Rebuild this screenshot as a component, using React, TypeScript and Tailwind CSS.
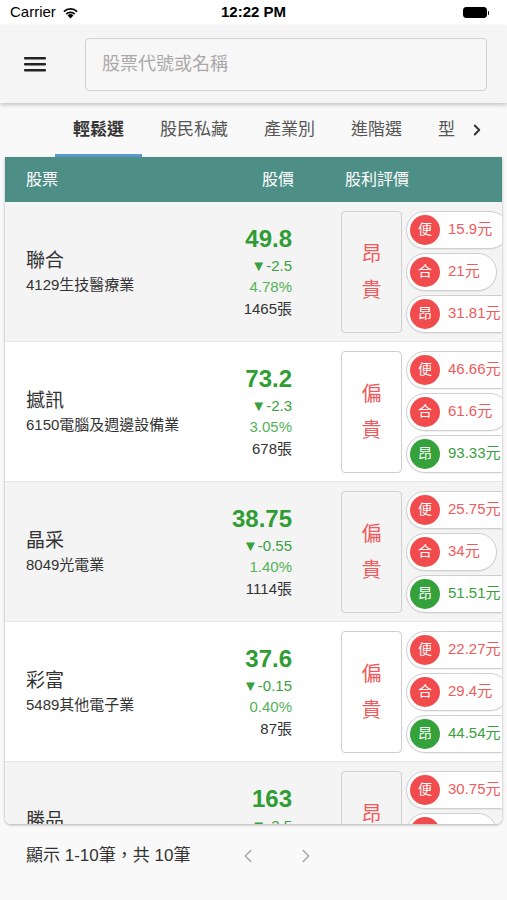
import { ChevronLeft, ChevronRight } from "lucide-react";

type Pill = { label: string; value: string; green?: boolean };
type Stock = {
  name: string;
  sub: string;
  price: string;
  change: string;
  pct: string;
  vol: string;
  rating: string;
  pills: Pill[];
};

const stocks: Stock[] = [
  {
    name: "聯合",
    sub: "4129生技醫療業",
    price: "49.8",
    change: "▼-2.5",
    pct: "4.78%",
    vol: "1465張",
    rating: "昂貴",
    pills: [
      { label: "便", value: "15.9元" },
      { label: "合", value: "21元" },
      { label: "昂", value: "31.81元" },
    ],
  },
  {
    name: "撼訊",
    sub: "6150電腦及週邊設備業",
    price: "73.2",
    change: "▼-2.3",
    pct: "3.05%",
    vol: "678張",
    rating: "偏貴",
    pills: [
      { label: "便", value: "46.66元" },
      { label: "合", value: "61.6元" },
      { label: "昂", value: "93.33元", green: true },
    ],
  },
  {
    name: "晶采",
    sub: "8049光電業",
    price: "38.75",
    change: "▼-0.55",
    pct: "1.40%",
    vol: "1114張",
    rating: "偏貴",
    pills: [
      { label: "便", value: "25.75元" },
      { label: "合", value: "34元" },
      { label: "昂", value: "51.51元", green: true },
    ],
  },
  {
    name: "彩富",
    sub: "5489其他電子業",
    price: "37.6",
    change: "▼-0.15",
    pct: "0.40%",
    vol: "87張",
    rating: "偏貴",
    pills: [
      { label: "便", value: "22.27元" },
      { label: "合", value: "29.4元" },
      { label: "昂", value: "44.54元", green: true },
    ],
  },
  {
    name: "勝品",
    sub: "3229電子零組件業",
    price: "163",
    change: "▼-3.5",
    pct: "2.10%",
    vol: "512張",
    rating: "昂貴",
    pills: [
      { label: "便", value: "30.75元" },
      { label: "合", value: "41元" },
      { label: "昂", value: "61.5元" },
    ],
  },
];

const tabs = ["輕鬆選", "股民私藏", "產業別", "進階選", "型態選"];

function StatusBar() {
  return (
    <div className="relative flex h-[25px] shrink-0 items-center bg-white px-[10px] text-[15px] text-black">
      <span>Carrier</span>
      <svg className="ml-[6px]" width="17" height="13" viewBox="0 0 17 13">
        <path d="M8.5 12.5 L5.6 9.4 A4.2 4.2 0 0 1 11.4 9.4 Z" fill="#000" />
        <path d="M3.7 7.4 A6.9 6.9 0 0 1 13.3 7.4 L12.1 8.7 A5.2 5.2 0 0 0 4.9 8.7 Z" fill="#000" />
        <path d="M1.3 4.9 A10.3 10.3 0 0 1 15.7 4.9 L14.5 6.2 A8.6 8.6 0 0 0 2.5 6.2 Z" fill="#000" />
      </svg>
      <span className="absolute left-1/2 -translate-x-1/2 font-semibold">12:22 PM</span>
      <div className="ml-auto mr-[8px] flex items-center">
        <div className="h-[11px] w-[24px] rounded-[3px] border border-black bg-black" />
        <div className="ml-[1px] h-[4px] w-[1.5px] rounded-r-sm bg-black" />
      </div>
    </div>
  );
}

function Header() {
  return (
    <div className="relative z-10 flex h-[78px] shrink-0 items-center bg-[#f5f5f5] shadow-[0_2px_4px_rgba(0,0,0,0.22)]">
      <svg className="ml-[24px]" width="22" height="16" viewBox="0 0 22 16">
        <rect x="0" y="1" width="22" height="2.4" rx="1" fill="#222" />
        <rect x="0" y="7" width="22" height="2.4" rx="1" fill="#222" />
        <rect x="0" y="13" width="22" height="2.4" rx="1" fill="#222" />
      </svg>
      <div className="ml-[39px] flex h-[53px] w-[402px] items-center rounded-[4px] border border-[#d2d2d2] bg-[#f7f7f7] pl-[16px] text-[18px] text-[#a9a9a9]">
        股票代號或名稱
      </div>
    </div>
  );
}

function Tabs() {
  return (
    <div className="flex h-[54px] shrink-0 items-stretch bg-[#f9f9f9]">
      <div className="ml-[55px] flex w-[400px] overflow-hidden">
        {tabs.map((t, i) => (
          <div
            key={t}
            className={
              i === 0
                ? "flex shrink-0 items-center border-b-[3px] border-[#5b9bd1] px-[18px] pt-[3px] text-[17px] font-bold text-[#333]"
                : "flex shrink-0 items-center border-b-[3px] border-transparent px-[18px] pt-[3px] text-[17px] text-[#555]"
            }
          >
            {t}
          </div>
        ))}
      </div>
      <div className="flex w-[44px] items-center justify-center pb-[1px]">
        <ChevronRight size={18} strokeWidth={2.6} color="#333" />
      </div>
    </div>
  );
}

function PillItem({ p }: { p: Pill }) {
  return (
    <div className="flex h-[38px] w-max items-center gap-[8px] whitespace-nowrap rounded-full border border-[#cfcfcf] bg-white pl-[3px] pr-[16px] shadow-[0_1px_1px_rgba(0,0,0,0.06)]">
      <div
        className={
          p.green
            ? "flex h-[30px] w-[30px] items-center justify-center rounded-full bg-[#35a13a] text-[14px] text-white"
            : "flex h-[30px] w-[30px] items-center justify-center rounded-full bg-[#f24b4d] text-[14px] text-white"
        }
      >
        {p.label}
      </div>
      <span className={p.green ? "text-[15px] text-[#3a9f3e]" : "text-[15px] text-[#ef5a5c]"}>{p.value}</span>
    </div>
  );
}

function Row({ s, odd }: { s: Stock; odd: boolean }) {
  return (
    <div
      className={
        odd
          ? "flex h-[140px] shrink-0 items-center border-b border-[#e6e6e6] bg-[#f4f4f4]"
          : "flex h-[140px] shrink-0 items-center border-b border-[#e6e6e6] bg-white"
      }
    >
      <div className="flex flex-1 flex-col pl-[21px]">
        <span className="text-[19px] leading-[26px] text-[#333]">{s.name}</span>
        <span className="text-[15px] leading-[22px] text-[#333]">{s.sub}</span>
      </div>
      <div className="mt-[3px] flex w-[100px] flex-col items-end">
        <span className="text-[24px] font-bold leading-[26px] text-[#2f9d34]">{s.price}</span>
        <span className="mt-[4px] text-[15px] leading-[20px] text-[#3a9f3e]">{s.change}</span>
        <span className="text-[15px] leading-[22px] text-[#55b258]">{s.pct}</span>
        <span className="text-[15px] leading-[22px] text-[#333]">{s.vol}</span>
      </div>
      <div className="ml-[49px] flex h-[122px] w-[61px] shrink-0 flex-col items-center justify-center rounded-[4px] border border-[#cfcfcf] text-[20px] leading-[36px] text-[#ef5a5c]">
        <span>{s.rating[0]}</span>
        <span>{s.rating[1]}</span>
      </div>
      <div className="ml-[4px] flex w-[96px] shrink-0 flex-col gap-[4px]">
        {s.pills.map((p) => (
          <PillItem key={p.label} p={p} />
        ))}
      </div>
    </div>
  );
}

export default function App() {
  return (
    <div className="flex h-[900px] w-[507px] flex-col overflow-hidden bg-[#f9f9f9] [font-family:'Liberation_Sans','Noto_Sans_CJK_TC',sans-serif]">
      <StatusBar />
      <Header />
      <Tabs />
      <div className="mx-[5px] flex h-[667px] shrink-0 flex-col overflow-hidden rounded-b-[6px] bg-white shadow-[0_1px_3px_rgba(0,0,0,0.3)]">
        <div className="flex h-[45px] shrink-0 items-center bg-[#4d8f86] text-[16px] text-white">
          <span className="flex-1 pl-[21px]">股票</span>
          <span className="w-[100px] pr-[2px] text-right">股價</span>
          <span className="ml-[49px] w-[157px]">股利評價</span>
        </div>
        {stocks.map((s, i) => (
          <Row key={s.name} s={s} odd={i % 2 === 0} />
        ))}
      </div>
      <div className="flex h-[64px] shrink-0 items-center text-[17px] text-[#333]">
        <span className="w-[237px] pl-[26px]">顯示 1-10筆，共 10筆</span>
        <ChevronLeft size={22} strokeWidth={1.6} color="#a6a6a6" />
        <ChevronRight className="ml-[36px]" size={22} strokeWidth={1.6} color="#a6a6a6" />
      </div>
    </div>
  );
}
